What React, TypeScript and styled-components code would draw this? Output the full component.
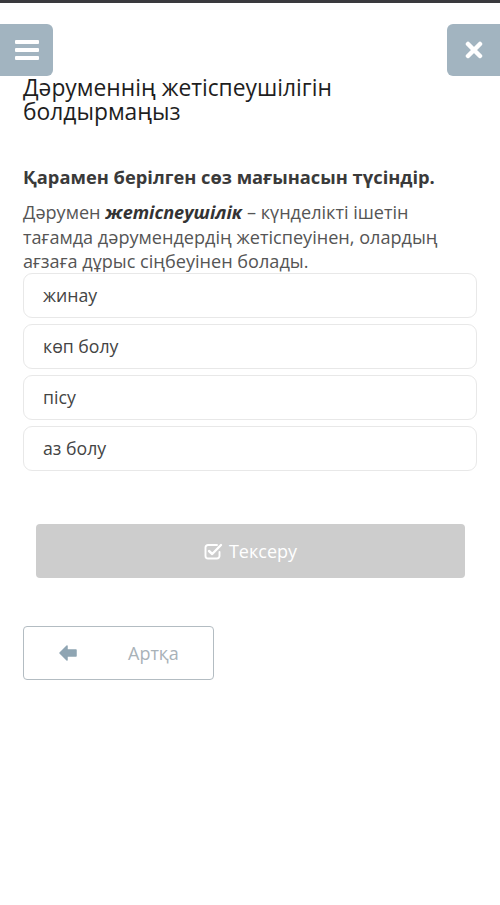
import React from "react";
import styled, { createGlobalStyle } from "styled-components";

const Global = createGlobalStyle`
  html, body { margin: 0; padding: 0; background: #ffffff; }
  body { font-family: "Open Sans", "Noto Sans", sans-serif; }
`;

const Page = styled.div`
  width: 500px;
  min-height: 905px;
  background: #fff;
  display: flex;
  flex-direction: column;
`;

const TopBar = styled.div`
  height: 3px;
  background: #3a3a3e;
`;

const Header = styled.div`
  display: flex;
  justify-content: space-between;
  margin-top: 21px;
`;

const IconButton = styled.button<{ $side: "left" | "right" }>`
  width: 53px;
  height: 52px;
  border: none;
  padding: 0;
  background: #a2b4c0;
  border-radius: ${(p) => (p.$side === "left" ? "0 6px 6px 0" : "6px 0 0 6px")};
  display: flex;
  align-items: center;
  justify-content: center;
  color: #fff;
`;

const Title = styled.h1`
  margin: 0 0 0 23px;
  font-size: 22.8px;
  line-height: 24px;
  font-weight: 400;
  color: #1e1e1e;
  width: 400px;
`;

const Content = styled.div`
  padding: 0 23px;
  display: flex;
  flex-direction: column;
`;

const Question = styled.p`
  margin: 41px 0 0;
  font-size: 18.3px;
  line-height: 24px;
  font-weight: 700;
  color: #3a3a3a;
  white-space: nowrap;
`;

const Text = styled.p`
  margin: 11px 0 0;
  font-size: 18.1px;
  line-height: 24.5px;
  color: #555;
  em { font-weight: 700; color: #333; }
`;

const Options = styled.div`
  margin-top: -1px;
  display: flex;
  flex-direction: column;
  gap: 6px;
`;

const Option = styled.div`
  height: 43px;
  border: 1px solid #e8e8e8;
  border-radius: 9px;
  display: flex;
  align-items: center;
  padding-left: 19px;
  font-size: 17.7px;
  color: #444;
`;

const CheckButton = styled.button`
  margin: 53px 12px 0 13px;
  height: 54px;
  border: none;
  border-radius: 4px;
  background: #cdcdcd;
  color: #fff;
  font-family: "Open Sans", sans-serif;
  font-size: 18px;
  display: flex;
  align-items: center;
  justify-content: center;
  gap: 6px;
`;

const BackButton = styled.button`
  margin-top: 48px;
  width: 191px;
  height: 54px;
  border: 1px solid #b3bcc2;
  border-radius: 4px;
  background: #fff;
  display: flex;
  align-items: center;
  padding: 0 0 0 35px;
  font-family: "Open Sans", sans-serif;
  font-size: 18px;
  color: #a9b2b8;
`;

const BackLabel = styled.span`
  margin-left: 51px;
`;

export default function App() {
  return (
    <Page>
      <Global />
      <TopBar />
      <Header>
        <IconButton $side="left" aria-label="menu">
          <svg width="24" height="20" viewBox="0 0 24 20">
            <rect x="0" y="0" width="24" height="4" rx="1" fill="#fff" />
            <rect x="0" y="8" width="24" height="4" rx="1" fill="#fff" />
            <rect x="0" y="16" width="24" height="4" rx="1" fill="#fff" />
          </svg>
        </IconButton>
        <IconButton $side="right" aria-label="close">
          <svg width="18" height="18" viewBox="0 0 18 18">
            <path d="M3 3 L15 15 M15 3 L3 15" stroke="#fff" strokeWidth="4.5" strokeLinecap="round" />
          </svg>
        </IconButton>
      </Header>
      <Title>Дәруменнің жетіспеушілігін болдырмаңыз</Title>
      <Content>
        <Question>Қарамен берілген сөз мағынасын түсіндір.</Question>
        <Text>
          Дәрумен <em>жетіспеушілік</em> – күнделікті ішетін тағамда дәрумендердің жетіспеуінен, олардың ағзаға дұрыс сіңбеуінен болады.
        </Text>
        <Options>
          <Option>жинау</Option>
          <Option>көп болу</Option>
          <Option>пісу</Option>
          <Option>аз болу</Option>
        </Options>
        <CheckButton>
          <svg width="19" height="18" viewBox="0 0 19 18">
            <path d="M13 3 H4 A2.5 2.5 0 0 0 1.5 5.5 V14 A2.5 2.5 0 0 0 4 16.5 H13 A2.5 2.5 0 0 0 15.5 14 V10" fill="none" stroke="#fff" strokeWidth="1.9" strokeLinecap="round" />
            <path d="M5 9 L8.2 12 L17 3" fill="none" stroke="#fff" strokeWidth="2.4" strokeLinecap="round" strokeLinejoin="round" />
          </svg>
          Тексеру
        </CheckButton>
        <BackButton>
          <svg width="18" height="16" viewBox="0 0 18 16">
            <path d="M8 1 L1 8 L8 15 L8 11 L17 11 L17 5 L8 5 Z" fill="#8fa5b3" strokeLinejoin="round" stroke="#8fa5b3" strokeWidth="1.5" />
          </svg>
          <BackLabel>Артқа</BackLabel>
        </BackButton>
      </Content>
    </Page>
  );
}
